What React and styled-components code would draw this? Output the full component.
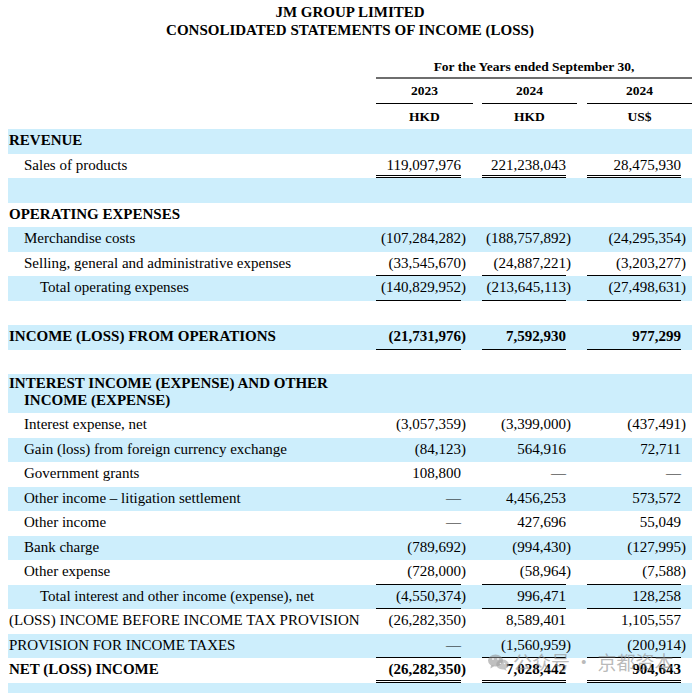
import React from "react";
import styled, { createGlobalStyle } from "styled-components";

const GlobalStyle = createGlobalStyle`
  html, body { margin: 0; padding: 0; background: #ffffff; }
  body { font-family: "Liberation Serif", "Times New Roman", serif; color: #000; }
`;

const COLS = "368px 85px 12px 9px 84px 11px 10px 94px 11px";
const BLUE = "#cdeefc";

const Page = styled.div`
  position: relative;
  width: 684px;
  height: 693px;
  overflow: hidden;
  padding: 3px 8px 0;
`;

const Title = styled.div`
  text-align: center;
  font-weight: bold;
  font-size: 15px;
  line-height: 18px;
`;

const HeadGrid = styled.div`
  display: grid;
  grid-template-columns: ${COLS};
  margin-top: 18px;
  font-weight: bold;
  font-size: 13.5px;
`;

const PeriodHead = styled.div`
  grid-column: 2 / 10;
  text-align: center;
  line-height: 20px;
  border-bottom: 2px solid #6e6e6e;
`;

const ColHead = styled.div`
  grid-column: ${(p) => p.$col};
  text-align: center;
  line-height: ${(p) => (p.$line ? "24px" : "25px")};
  border-bottom: ${(p) => (p.$line ? "1px solid #000" : "none")};
`;

const Row = styled.div`
  display: grid;
  grid-template-columns: ${COLS};
  height: ${(p) => (p.$tall ? "39px" : "24.5px")};
  background: ${(p) => (p.$shade ? BLUE : "transparent")};
  font-size: 15px;
  line-height: 17px;
`;

const Label = styled.div`
  padding: 3px 0 0 ${(p) => [1, 16, 32][p.$indent || 0]}px;
  font-weight: ${(p) => (p.$bold ? "bold" : "normal")};
  white-space: nowrap;
  ${(p) => p.$hang && "padding-left: 16px; text-indent: -15px; padding-top: 1px;"}
`;

const Num = styled.div`
  padding-top: 3px;
  text-align: right;
  white-space: nowrap;
  font-weight: ${(p) => (p.$bold ? "bold" : "normal")};
  border-bottom: ${(p) =>
    p.$under === "double" ? "3px double #000" : p.$under === "single" ? "1px solid #000" : "none"};
  box-sizing: border-box;
`;

const Paren = styled.div`
  padding-top: 3px;
  font-weight: ${(p) => (p.$bold ? "bold" : "normal")};
`;

const Watermark = styled.div`
  position: absolute;
  left: 488px;
  top: 651px;
  display: flex;
  align-items: center;
  gap: 4px;
  color: rgba(140, 140, 140, 0.6);
  font-family: "Noto Sans CJK SC", "Noto Sans", sans-serif;
  font-size: 19px;
  line-height: 22px;
  pointer-events: none;
`;

const WeChatIcon = () => (
  <svg width="21" height="17" viewBox="0 0 21 17">
    <g fill="rgba(140,140,140,0.55)">
      <ellipse cx="7.5" cy="6.5" rx="7.5" ry="6" />
      <path d="M3 11 L2.5 14.5 L6.5 12 Z" />
      <ellipse cx="14.5" cy="10.5" rx="6.3" ry="5" fill="rgba(160,160,160,0.6)" />
      <path d="M17.5 14.5 L19 17 L15 15 Z" fill="rgba(160,160,160,0.6)" />
    </g>
    <g fill="#fff" opacity="0.8">
      <circle cx="5" cy="5" r="1" />
      <circle cx="10" cy="5" r="1" />
      <circle cx="12.5" cy="9.5" r="0.8" />
      <circle cx="16.5" cy="9.5" r="0.8" />
    </g>
  </svg>
);

const rows = [
  { label: "REVENUE", bold: true, shade: true },
  { label: "Sales of products", indent: 1, vals: ["119,097,976", "221,238,043", "28,475,930"], under: "double" },
  { shade: true },
  { label: "OPERATING EXPENSES", bold: true },
  { label: "Merchandise costs", indent: 1, shade: true, vals: ["(107,284,282)", "(188,757,892)", "(24,295,354)"] },
  { label: "Selling, general and administrative expenses", indent: 1, vals: ["(33,545,670)", "(24,887,221)", "(3,203,277)"], under: "single" },
  { label: "Total operating expenses", indent: 2, shade: true, vals: ["(140,829,952)", "(213,645,113)", "(27,498,631)"], under: "single" },
  {},
  { label: "INCOME (LOSS) FROM OPERATIONS", bold: true, boldNums: true, shade: true, vals: ["(21,731,976)", "7,592,930", "977,299"], under: "single" },
  {},
  { label: "INTEREST INCOME (EXPENSE) AND OTHER", label2: "INCOME (EXPENSE)", bold: true, shade: true, tall: true },
  { label: "Interest expense, net", indent: 1, vals: ["(3,057,359)", "(3,399,000)", "(437,491)"] },
  { label: "Gain (loss) from foreign currency exchange", indent: 1, shade: true, vals: ["(84,123)", "564,916", "72,711"] },
  { label: "Government grants", indent: 1, vals: ["108,800", "—", "—"] },
  { label: "Other income – litigation settlement", indent: 1, shade: true, vals: ["—", "4,456,253", "573,572"] },
  { label: "Other income", indent: 1, vals: ["—", "427,696", "55,049"] },
  { label: "Bank charge", indent: 1, shade: true, vals: ["(789,692)", "(994,430)", "(127,995)"] },
  { label: "Other expense", indent: 1, vals: ["(728,000)", "(58,964)", "(7,588)"], under: "single" },
  { label: "Total interest and other income (expense), net", indent: 2, shade: true, vals: ["(4,550,374)", "996,471", "128,258"], under: "single" },
  { label: "(LOSS) INCOME BEFORE INCOME TAX PROVISION", vals: ["(26,282,350)", "8,589,401", "1,105,557"] },
  { label: "PROVISION FOR INCOME TAXES", shade: true, vals: ["—", "(1,560,959)", "(200,914)"], under: "single" },
  { label: "NET (LOSS) INCOME", bold: true, boldNums: true, vals: ["(26,282,350)", "7,028,442", "904,643"], under: "double" },
  { shade: true },
];

function Values({ vals, under, bold }) {
  const cells = [];
  (vals || [null, null, null]).forEach((v, i) => {
    const neg = v && v.endsWith(")");
    cells.push(
      <Num key={`n${i}`} $under={v ? under : undefined} $bold={bold}>
        {v ? (neg ? v.slice(0, -1) : v) : ""}
      </Num>
    );
    cells.push(
      <Paren key={`p${i}`} $bold={bold}>
        {neg ? ")" : ""}
      </Paren>
    );
    if (i < 2) cells.push(<div key={`g${i}`} />);
  });
  return cells;
}

export default function App() {
  return (
    <>
      <GlobalStyle />
      <Page>
        <Title>
          JM GROUP LIMITED
          <br />
          CONSOLIDATED STATEMENTS OF INCOME (LOSS)
        </Title>
        <HeadGrid>
          <PeriodHead>For the Years ended September 30,</PeriodHead>
          <ColHead $col="2 / 4" $line>2023</ColHead>
          <ColHead $col="5 / 7" $line>2024</ColHead>
          <ColHead $col="8 / 10" $line>2024</ColHead>
          <ColHead $col="2 / 4">HKD</ColHead>
          <ColHead $col="5 / 7">HKD</ColHead>
          <ColHead $col="8 / 10">US$</ColHead>
        </HeadGrid>
        {rows.map((r, i) => (
          <Row key={i} $shade={r.shade} $tall={r.tall}>
            <Label $indent={r.indent} $bold={r.bold} $hang={!!r.label2}>
              {r.label || ""}
              {r.label2 && (
                <>
                  <br />
                  {r.label2}
                </>
              )}
            </Label>
            <Values vals={r.vals} under={r.under} bold={r.boldNums} />
          </Row>
        ))}
        <Watermark>
          <WeChatIcon />
          <span>公众号 · 京都资本</span>
        </Watermark>
      </Page>
    </>
  );
}
